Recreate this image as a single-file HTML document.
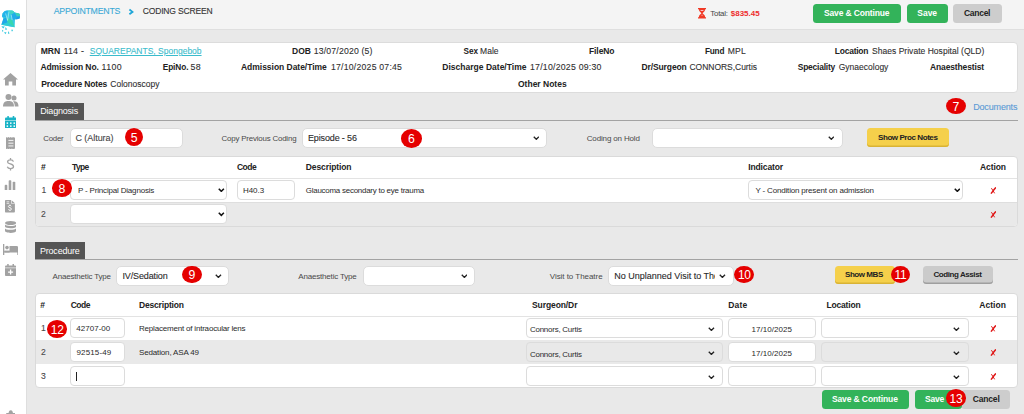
<!DOCTYPE html><html><head><meta charset="utf-8"><style>html,body{margin:0;padding:0;width:1024px;height:414px;overflow:hidden;font-family:'Liberation Sans', sans-serif;}</style></head><body><div style="position:relative;width:1024px;height:414px;overflow:hidden"><div style="position:absolute;left:0px;top:0px;width:1024px;height:414px;background:#e9e9e9"></div>
<div style="position:absolute;left:0px;top:0px;width:26px;height:414px;background:#fff"></div>
<div style="position:absolute;left:26px;top:0px;width:1px;height:414px;background:#dedede"></div>
<div style="position:absolute;left:27px;top:0px;width:997px;height:29px;background:#f4f4f4"></div>
<div style="position:absolute;left:27px;top:29px;width:997px;height:1px;background:#dfdfdf"></div>
<span id="t0" style="position:absolute;left:53.76px;top:6.40px;font-size:8.756px;font-weight:400;color:#3aa9d6;line-height:10.06px;white-space:pre;letter-spacing:-0.220px;-webkit-text-stroke:0.1px currentColor;">APPOINTMENTS<span id="mt0" style="display:inline-block;width:0;height:0"></span></span>
<svg style="position:absolute;left:128px;top:7.5px" width="7" height="8" viewBox="0 0 7 8"><path d="M1.4 1.5 L4.5 3.9 L1.4 6.3" stroke="#1fa6d8" stroke-width="1.8" fill="none"/></svg>
<span id="t1" style="position:absolute;left:142.72px;top:7.40px;font-size:8.562px;font-weight:400;color:#333;line-height:9.84px;white-space:pre;letter-spacing:-0.193px;-webkit-text-stroke:0.1px currentColor;">CODING SCREEN<span id="mt1" style="display:inline-block;width:0;height:0"></span></span>
<svg style="position:absolute;left:698.3px;top:8.3px" width="8" height="10.5" viewBox="0 0 8 10.5"><path d="M0 0 H8 V1.3 H7.2 C7.2 3.4 5.2 4.3 4.6 5.25 C5.2 6.2 7.2 7.1 7.2 9.2 H8 V10.5 H0 V9.2 H0.8 C0.8 7.1 2.8 6.2 3.4 5.25 C2.8 4.3 0.8 3.4 0.8 1.3 H0 Z" fill="#f03a26"/><rect x="2.6" y="2.2" width="2.8" height="0.8" fill="#fde"/><rect x="3.6" y="6.8" width="0.9" height="0.9" fill="#fde"/></svg>
<span id="t2" style="position:absolute;left:710.24px;top:8.80px;font-size:7.92px;font-weight:400;color:#444;line-height:9.10px;white-space:pre;letter-spacing:-0.220px;">Total:<span id="mt2" style="display:inline-block;width:0;height:0"></span></span>
<span id="t3" style="position:absolute;left:730.76px;top:8.80px;font-size:8px;font-weight:700;color:#ee2d2d;line-height:9.19px;white-space:pre;letter-spacing:0.000px;">$835.45<span id="mt3" style="display:inline-block;width:0;height:0"></span></span>
<div style="position:absolute;left:813px;top:4px;width:88px;height:19px;background:#33b35a;border-radius:3.5px;"></div>
<span id="t4" style="position:absolute;left:824.00px;top:8.75px;font-size:8.5px;font-weight:700;color:#fff;line-height:9.77px;white-space:pre;letter-spacing:-0.149px;">Save &amp; Continue<span id="mt4" style="display:inline-block;width:0;height:0"></span></span>
<div style="position:absolute;left:907px;top:4px;width:41px;height:19px;background:#33b35a;border-radius:3.5px;"></div>
<span id="t5" style="position:absolute;left:917.24px;top:8.75px;font-size:8.5px;font-weight:700;color:#fff;line-height:9.77px;white-space:pre;letter-spacing:0.000px;">Save<span id="mt5" style="display:inline-block;width:0;height:0"></span></span>
<div style="position:absolute;left:953px;top:4px;width:49px;height:19px;background:#cdcdcd;border-radius:3.5px;"></div>
<span id="t6" style="position:absolute;left:964.00px;top:8.75px;font-size:8.5px;font-weight:700;color:#222;line-height:9.77px;white-space:pre;letter-spacing:-0.288px;">Cancel<span id="mt6" style="display:inline-block;width:0;height:0"></span></span>
<div style="position:absolute;left:35px;top:42px;width:983px;height:51px;background:#fff;border:1px solid #dcdcdc;border-radius:4px;box-sizing:border-box"></div>
<span id="t7" style="position:absolute;left:40.76px;top:47.00px;font-size:8.626px;font-weight:700;color:#222;line-height:9.91px;white-space:pre;letter-spacing:-0.060px;">MRN<span id="mt7" style="display:inline-block;width:0;height:0"></span></span>
<span id="t8" style="position:absolute;left:63.48px;top:46.00px;font-size:8.884px;font-weight:400;color:#303030;line-height:10.21px;white-space:pre;letter-spacing:0.220px;-webkit-text-stroke:0.1px currentColor;">114 -<span id="mt8" style="display:inline-block;width:0;height:0"></span></span>
<span id="t9" style="position:absolute;left:89.76px;top:47.00px;font-size:8.5px;font-weight:400;color:#3bbccc;line-height:9.77px;white-space:pre;letter-spacing:0.000px;-webkit-text-stroke:0.1px currentColor;text-decoration:underline;">SQUAREPANTS, Spongebob<span id="mt9" style="display:inline-block;width:0;height:0"></span></span>
<span id="t10" style="position:absolute;left:292.00px;top:47.00px;font-size:8.5px;font-weight:700;color:#222;line-height:9.77px;white-space:pre;letter-spacing:0.000px;">DOB<span id="mt10" style="display:inline-block;width:0;height:0"></span></span>
<span id="t11" style="position:absolute;left:313.72px;top:46.00px;font-size:8.694px;font-weight:400;color:#303030;line-height:9.99px;white-space:pre;letter-spacing:0.171px;-webkit-text-stroke:0.1px currentColor;">13/07/2020 (5)<span id="mt11" style="display:inline-block;width:0;height:0"></span></span>
<span id="t12" style="position:absolute;left:463.48px;top:47.00px;font-size:8.208px;font-weight:700;color:#222;line-height:9.43px;white-space:pre;letter-spacing:0.020px;">Sex<span id="mt12" style="display:inline-block;width:0;height:0"></span></span>
<span id="t13" style="position:absolute;left:480.00px;top:47.00px;font-size:8.5px;font-weight:400;color:#303030;line-height:9.77px;white-space:pre;letter-spacing:0.053px;-webkit-text-stroke:0.1px currentColor;">Male<span id="mt13" style="display:inline-block;width:0;height:0"></span></span>
<span id="t14" style="position:absolute;left:589.00px;top:47.00px;font-size:8.5px;font-weight:700;color:#222;line-height:9.77px;white-space:pre;letter-spacing:-0.096px;">FileNo<span id="mt14" style="display:inline-block;width:0;height:0"></span></span>
<span id="t15" style="position:absolute;left:705.00px;top:47.00px;font-size:8.247px;font-weight:700;color:#222;line-height:9.48px;white-space:pre;letter-spacing:-0.220px;">Fund<span id="mt15" style="display:inline-block;width:0;height:0"></span></span>
<span id="t16" style="position:absolute;left:727.72px;top:47.00px;font-size:8.6px;font-weight:400;color:#303030;line-height:9.88px;white-space:pre;letter-spacing:0.140px;-webkit-text-stroke:0.1px currentColor;">MPL<span id="mt16" style="display:inline-block;width:0;height:0"></span></span>
<span id="t17" style="position:absolute;left:834.76px;top:47.00px;font-size:8.486px;font-weight:700;color:#222;line-height:9.75px;white-space:pre;letter-spacing:-0.220px;">Location<span id="mt17" style="display:inline-block;width:0;height:0"></span></span>
<span id="t18" style="position:absolute;left:872.00px;top:47.00px;font-size:8.5px;font-weight:400;color:#303030;line-height:9.77px;white-space:pre;letter-spacing:0.030px;-webkit-text-stroke:0.1px currentColor;">Shaes Private Hospital (QLD)<span id="mt18" style="display:inline-block;width:0;height:0"></span></span>
<span id="t19" style="position:absolute;left:40.48px;top:63.00px;font-size:8.5px;font-weight:700;color:#222;line-height:9.77px;white-space:pre;letter-spacing:-0.093px;">Admission No.<span id="mt19" style="display:inline-block;width:0;height:0"></span></span>
<span id="t20" style="position:absolute;left:101.60px;top:62.00px;font-size:8.8px;font-weight:400;color:#303030;line-height:10.11px;white-space:pre;letter-spacing:0.350px;-webkit-text-stroke:0.1px currentColor;">1100<span id="mt20" style="display:inline-block;width:0;height:0"></span></span>
<span id="t21" style="position:absolute;left:162.72px;top:63.00px;font-size:8.287px;font-weight:700;color:#222;line-height:9.52px;white-space:pre;letter-spacing:-0.092px;">EpiNo.<span id="mt21" style="display:inline-block;width:0;height:0"></span></span>
<span id="t22" style="position:absolute;left:190.40px;top:62.00px;font-size:8.8px;font-weight:400;color:#303030;line-height:10.11px;white-space:pre;letter-spacing:0.550px;-webkit-text-stroke:0.1px currentColor;">58<span id="mt22" style="display:inline-block;width:0;height:0"></span></span>
<span id="t23" style="position:absolute;left:241.00px;top:63.00px;font-size:8.5px;font-weight:700;color:#222;line-height:9.77px;white-space:pre;letter-spacing:-0.027px;">Admission Date/Time<span id="mt23" style="display:inline-block;width:0;height:0"></span></span>
<span id="t24" style="position:absolute;left:331.00px;top:62.00px;font-size:8.688px;font-weight:400;color:#303030;line-height:9.98px;white-space:pre;letter-spacing:0.220px;-webkit-text-stroke:0.1px currentColor;">17/10/2025 07:45<span id="mt24" style="display:inline-block;width:0;height:0"></span></span>
<span id="t25" style="position:absolute;left:442.24px;top:63.00px;font-size:8.5px;font-weight:700;color:#222;line-height:9.77px;white-space:pre;letter-spacing:0.018px;">Discharge Date/Time<span id="mt25" style="display:inline-block;width:0;height:0"></span></span>
<span id="t26" style="position:absolute;left:530.00px;top:62.00px;font-size:8.769px;font-weight:400;color:#303030;line-height:10.08px;white-space:pre;letter-spacing:0.220px;-webkit-text-stroke:0.1px currentColor;">17/10/2025 09:30<span id="mt26" style="display:inline-block;width:0;height:0"></span></span>
<span id="t27" style="position:absolute;left:641.48px;top:63.00px;font-size:8.5px;font-weight:700;color:#222;line-height:9.77px;white-space:pre;letter-spacing:-0.107px;">Dr/Surgeon<span id="mt27" style="display:inline-block;width:0;height:0"></span></span>
<span id="t28" style="position:absolute;left:689.52px;top:63.00px;font-size:8.5px;font-weight:400;color:#303030;line-height:9.77px;white-space:pre;letter-spacing:-0.037px;-webkit-text-stroke:0.1px currentColor;">CONNORS,Curtis<span id="mt28" style="display:inline-block;width:0;height:0"></span></span>
<span id="t29" style="position:absolute;left:797.76px;top:63.00px;font-size:8.443px;font-weight:700;color:#222;line-height:9.70px;white-space:pre;letter-spacing:-0.220px;">Speciality<span id="mt29" style="display:inline-block;width:0;height:0"></span></span>
<span id="t30" style="position:absolute;left:838.76px;top:63.00px;font-size:8.5px;font-weight:400;color:#303030;line-height:9.77px;white-space:pre;letter-spacing:0.000px;-webkit-text-stroke:0.1px currentColor;">Gynaecology<span id="mt30" style="display:inline-block;width:0;height:0"></span></span>
<span id="t31" style="position:absolute;left:930.00px;top:63.00px;font-size:8.5px;font-weight:700;color:#222;line-height:9.77px;white-space:pre;letter-spacing:-0.133px;">Anaesthestist<span id="mt31" style="display:inline-block;width:0;height:0"></span></span>
<span id="t32" style="position:absolute;left:41.24px;top:79.80px;font-size:8.5px;font-weight:700;color:#222;line-height:9.77px;white-space:pre;letter-spacing:-0.137px;">Procedure Notes<span id="mt32" style="display:inline-block;width:0;height:0"></span></span>
<span id="t33" style="position:absolute;left:110.24px;top:79.80px;font-size:8.5px;font-weight:400;color:#303030;line-height:9.77px;white-space:pre;letter-spacing:0.016px;-webkit-text-stroke:0.1px currentColor;">Colonoscopy<span id="mt33" style="display:inline-block;width:0;height:0"></span></span>
<span id="t34" style="position:absolute;left:518.00px;top:79.80px;font-size:8.5px;font-weight:700;color:#222;line-height:9.77px;white-space:pre;letter-spacing:0.000px;">Other Notes<span id="mt34" style="display:inline-block;width:0;height:0"></span></span>
<div style="position:absolute;left:35px;top:103px;width:49px;height:17px;background:#555"></div>
<span id="t35" style="position:absolute;left:40.24px;top:106.10px;font-size:9px;font-weight:400;color:#fff;line-height:10.34px;white-space:pre;letter-spacing:-0.200px;">Diagnosis<span id="mt35" style="display:inline-block;width:0;height:0"></span></span>
<div style="position:absolute;left:35px;top:120px;width:983px;height:1px;background:#a3a3a3"></div>
<span id="t37" style="position:absolute;left:973.20px;top:102.00px;font-size:9px;font-weight:400;color:#5a9ad6;line-height:10.34px;white-space:pre;letter-spacing:-0.160px;-webkit-text-stroke:0.1px currentColor;">Documents<span id="mt37" style="display:inline-block;width:0;height:0"></span></span>
<span id="t38" style="position:absolute;left:43.24px;top:134.00px;font-size:7.817px;font-weight:400;color:#4a4a4a;line-height:8.98px;white-space:pre;letter-spacing:-0.200px;">Coder<span id="mt38" style="display:inline-block;width:0;height:0"></span></span>
<div style="position:absolute;left:70px;top:128px;width:113px;height:20px;background:#fff;border:1px solid #dcdcdc;border-radius:5px;box-sizing:border-box"></div>
<span id="t39" style="position:absolute;left:75.48px;top:133.30px;font-size:9px;font-weight:400;color:#454545;line-height:10.34px;white-space:pre;letter-spacing:-0.053px;-webkit-text-stroke:0.1px currentColor;">C (Altura)<span id="mt39" style="display:inline-block;width:0;height:0"></span></span>
<span id="t41" style="position:absolute;left:221.48px;top:134.00px;font-size:7.909px;font-weight:400;color:#4a4a4a;line-height:9.09px;white-space:pre;letter-spacing:-0.182px;">Copy Previous Coding<span id="mt41" style="display:inline-block;width:0;height:0"></span></span>
<div style="position:absolute;left:302px;top:128px;width:245px;height:20px;background:#fff;border:1px solid #dcdcdc;border-radius:5px;box-sizing:border-box"></div>
<span id="t42" style="position:absolute;left:308.00px;top:133.10px;font-size:9px;font-weight:400;color:#2a2a2a;line-height:10.34px;white-space:pre;letter-spacing:-0.145px;-webkit-text-stroke:0.1px currentColor;">Episode - 56<span id="mt42" style="display:inline-block;width:0;height:0"></span></span>
<svg style="position:absolute;left:532.675px;top:136.0625px" width="6.6499999999999995" height="4.2749999999999995" viewBox="0 0 7 4.5"><path d="M0.8 0.8 L3.5 3.5 L6.2 0.8" stroke="#222" stroke-width="1.35" fill="none"/></svg>
<span id="t44" style="position:absolute;left:586.72px;top:133.90px;font-size:8px;font-weight:400;color:#4a4a4a;line-height:9.19px;white-space:pre;letter-spacing:-0.148px;">Coding on Hold<span id="mt44" style="display:inline-block;width:0;height:0"></span></span>
<div style="position:absolute;left:652px;top:128px;width:191px;height:20px;background:#fff;border:1px solid #dcdcdc;border-radius:5px;box-sizing:border-box"></div>
<svg style="position:absolute;left:827.675px;top:136.0625px" width="6.6499999999999995" height="4.2749999999999995" viewBox="0 0 7 4.5"><path d="M0.8 0.8 L3.5 3.5 L6.2 0.8" stroke="#222" stroke-width="1.35" fill="none"/></svg>
<div style="position:absolute;left:867px;top:128px;width:82px;height:19px;background:#f5d04b;border-radius:3.5px;box-shadow: inset 0 -1.5px 0 #d9b335;"></div>
<span id="t45" style="position:absolute;left:878.00px;top:133.40px;font-size:8.053px;font-weight:700;color:#222;line-height:9.25px;white-space:pre;letter-spacing:-0.450px;">Show Proc Notes<span id="mt45" style="display:inline-block;width:0;height:0"></span></span>
<div style="position:absolute;left:35px;top:156px;width:983px;height:71px;background:#fff;border:1px solid #dadada;border-radius:4px;box-sizing:border-box;overflow:hidden"></div>
<div style="position:absolute;left:36px;top:178px;width:981px;height:1px;background:#e3e3e3"></div>
<div style="position:absolute;left:36px;top:203px;width:981px;height:23px;background:#e9e9e9;border-radius:0 0 3px 3px"></div>
<div style="position:absolute;left:36px;top:202px;width:981px;height:1px;background:#dedede"></div>
<span id="t46" style="position:absolute;left:41.00px;top:163.00px;font-size:8.5px;font-weight:700;color:#222;line-height:9.77px;white-space:pre;letter-spacing:0.000px;">#<span id="mt46" style="display:inline-block;width:0;height:0"></span></span>
<span id="t47" style="position:absolute;left:72.04px;top:163.00px;font-size:8.443px;font-weight:700;color:#222;line-height:9.70px;white-space:pre;letter-spacing:-0.600px;">Type<span id="mt47" style="display:inline-block;width:0;height:0"></span></span>
<span id="t48" style="position:absolute;left:237.00px;top:163.00px;font-size:8.5px;font-weight:700;color:#222;line-height:9.77px;white-space:pre;letter-spacing:-0.533px;">Code<span id="mt48" style="display:inline-block;width:0;height:0"></span></span>
<span id="t49" style="position:absolute;left:305.76px;top:163.00px;font-size:8.5px;font-weight:700;color:#222;line-height:9.77px;white-space:pre;letter-spacing:-0.096px;">Description<span id="mt49" style="display:inline-block;width:0;height:0"></span></span>
<span id="t50" style="position:absolute;left:748.24px;top:163.00px;font-size:8.5px;font-weight:700;color:#222;line-height:9.77px;white-space:pre;letter-spacing:-0.120px;">Indicator<span id="mt50" style="display:inline-block;width:0;height:0"></span></span>
<span id="t51" style="position:absolute;left:980.00px;top:163.00px;font-size:8.5px;font-weight:700;color:#222;line-height:9.77px;white-space:pre;letter-spacing:-0.096px;">Action<span id="mt51" style="display:inline-block;width:0;height:0"></span></span>
<span id="t52" style="position:absolute;left:41.50px;top:185.70px;font-size:8.6px;font-weight:400;color:#4a4a4a;line-height:9.88px;white-space:pre;letter-spacing:0.000px;-webkit-text-stroke:0.1px currentColor;">1<span id="mt52" style="display:inline-block;width:0;height:0"></span></span>
<div style="position:absolute;left:70px;top:180px;width:157px;height:20px;background:#fff;border:1px solid #dcdcdc;border-radius:4px;box-sizing:border-box"></div>
<span id="t53" style="position:absolute;left:78.00px;top:185.70px;font-size:8px;font-weight:400;color:#2a2a2a;line-height:9.19px;white-space:pre;letter-spacing:-0.182px;">P - Principal Diagnosis<span id="mt53" style="display:inline-block;width:0;height:0"></span></span>
<svg style="position:absolute;left:218.175px;top:188.16250000000002px" width="6.6499999999999995" height="4.2749999999999995" viewBox="0 0 7 4.5"><path d="M0.8 0.8 L3.5 3.5 L6.2 0.8" stroke="#111" stroke-width="1.6" fill="none"/></svg>
<div style="position:absolute;left:237px;top:180px;width:58px;height:20px;background:#fff;border:1px solid #dcdcdc;border-radius:4px;box-sizing:border-box"></div>
<span id="t55" style="position:absolute;left:242.96px;top:185.70px;font-size:8px;font-weight:400;color:#2a2a2a;line-height:9.19px;white-space:pre;letter-spacing:-0.040px;">H40.3<span id="mt55" style="display:inline-block;width:0;height:0"></span></span>
<span id="t56" style="position:absolute;left:305.76px;top:185.70px;font-size:7.911px;font-weight:400;color:#2a2a2a;line-height:9.09px;white-space:pre;letter-spacing:-0.220px;">Glaucoma secondary to eye trauma<span id="mt56" style="display:inline-block;width:0;height:0"></span></span>
<div style="position:absolute;left:748px;top:180px;width:215px;height:20px;background:#fff;border:1px solid #dcdcdc;border-radius:4px;box-sizing:border-box"></div>
<span id="t57" style="position:absolute;left:755.52px;top:185.70px;font-size:8px;font-weight:400;color:#2a2a2a;line-height:9.19px;white-space:pre;letter-spacing:-0.179px;">Y - Condition present on admission<span id="mt57" style="display:inline-block;width:0;height:0"></span></span>
<svg style="position:absolute;left:953.675px;top:188.16250000000002px" width="6.6499999999999995" height="4.2749999999999995" viewBox="0 0 7 4.5"><path d="M0.8 0.8 L3.5 3.5 L6.2 0.8" stroke="#111" stroke-width="1.6" fill="none"/></svg>
<svg style="position:absolute;left:989.6px;top:186.7px" width="6.5" height="7" viewBox="0 0 6.5 7"><path d="M1.4 1.2 C2.6 2.8 3.6 4.6 4.6 6.3" stroke="#e01818" stroke-width="1.0" fill="none"/><path d="M5.9 0.4 C4.2 2.2 2.6 4.4 1.0 6.6" stroke="#e01818" stroke-width="1.5" fill="none"/></svg>
<span id="t58" style="position:absolute;left:41.00px;top:210.20px;font-size:8.6px;font-weight:400;color:#4a4a4a;line-height:9.88px;white-space:pre;letter-spacing:0.000px;-webkit-text-stroke:0.1px currentColor;">2<span id="mt58" style="display:inline-block;width:0;height:0"></span></span>
<div style="position:absolute;left:70px;top:204px;width:157px;height:20px;background:#fff;border:1px solid #dcdcdc;border-radius:4px;box-sizing:border-box"></div>
<svg style="position:absolute;left:218.175px;top:212.4625px" width="6.6499999999999995" height="4.2749999999999995" viewBox="0 0 7 4.5"><path d="M0.8 0.8 L3.5 3.5 L6.2 0.8" stroke="#111" stroke-width="1.6" fill="none"/></svg>
<svg style="position:absolute;left:989.6px;top:211.2px" width="6.5" height="7" viewBox="0 0 6.5 7"><path d="M1.4 1.2 C2.6 2.8 3.6 4.6 4.6 6.3" stroke="#e01818" stroke-width="1.0" fill="none"/><path d="M5.9 0.4 C4.2 2.2 2.6 4.4 1.0 6.6" stroke="#e01818" stroke-width="1.5" fill="none"/></svg>
<div style="position:absolute;left:35px;top:242px;width:50px;height:17px;background:#555"></div>
<span id="t59" style="position:absolute;left:39.96px;top:245.70px;font-size:8.946px;font-weight:400;color:#fff;line-height:10.28px;white-space:pre;letter-spacing:-0.170px;">Procedure<span id="mt59" style="display:inline-block;width:0;height:0"></span></span>
<div style="position:absolute;left:35px;top:259px;width:983px;height:1px;background:#a3a3a3"></div>
<span id="t60" style="position:absolute;left:52.52px;top:271.60px;font-size:8px;font-weight:400;color:#4a4a4a;line-height:9.19px;white-space:pre;letter-spacing:-0.181px;">Anaesthetic Type<span id="mt60" style="display:inline-block;width:0;height:0"></span></span>
<div style="position:absolute;left:116px;top:266px;width:113px;height:20px;background:#fff;border:1px solid #dcdcdc;border-radius:5px;box-sizing:border-box"></div>
<span id="t61" style="position:absolute;left:122.48px;top:271.00px;font-size:9px;font-weight:400;color:#2a2a2a;line-height:10.34px;white-space:pre;letter-spacing:-0.128px;-webkit-text-stroke:0.1px currentColor;">IV/Sedation<span id="mt61" style="display:inline-block;width:0;height:0"></span></span>
<svg style="position:absolute;left:214.80499999999998px;top:274.0175px" width="6.79" height="4.365" viewBox="0 0 7 4.5"><path d="M0.8 0.8 L3.5 3.5 L6.2 0.8" stroke="#222" stroke-width="1.4" fill="none"/></svg>
<span id="t63" style="position:absolute;left:298.24px;top:271.60px;font-size:8px;font-weight:400;color:#4a4a4a;line-height:9.19px;white-space:pre;letter-spacing:-0.181px;">Anaesthetic Type<span id="mt63" style="display:inline-block;width:0;height:0"></span></span>
<div style="position:absolute;left:363px;top:266px;width:112px;height:20px;background:#fff;border:1px solid #dcdcdc;border-radius:5px;box-sizing:border-box"></div>
<svg style="position:absolute;left:460.605px;top:274.0175px" width="6.79" height="4.365" viewBox="0 0 7 4.5"><path d="M0.8 0.8 L3.5 3.5 L6.2 0.8" stroke="#222" stroke-width="1.4" fill="none"/></svg>
<span id="t64" style="position:absolute;left:549.76px;top:271.60px;font-size:8px;font-weight:400;color:#4a4a4a;line-height:9.19px;white-space:pre;letter-spacing:-0.043px;">Visit to Theatre<span id="mt64" style="display:inline-block;width:0;height:0"></span></span>
<div style="position:absolute;left:608px;top:266px;width:126px;height:20px;background:#fff;border:1px solid #dcdcdc;border-radius:5px;box-sizing:border-box"></div>
<div style="position:absolute;left:614.3px;top:267px;width:100.5px;height:18px;overflow:hidden">
<span id="t65" style="position:absolute;left:0.00px;top:4.00px;font-size:9px;font-weight:400;color:#2a2a2a;line-height:10.34px;white-space:pre;letter-spacing:0.000px;-webkit-text-stroke:0.1px currentColor;">No Unplanned Visit to Theatre<span id="mt65" style="display:inline-block;width:0;height:0"></span></span>
</div>
<svg style="position:absolute;left:718.905px;top:274.0175px" width="6.79" height="4.365" viewBox="0 0 7 4.5"><path d="M0.8 0.8 L3.5 3.5 L6.2 0.8" stroke="#222" stroke-width="1.4" fill="none"/></svg>
<div style="position:absolute;left:835px;top:265.5px;width:60px;height:18.5px;background:#f5d04b;border-radius:3.5px;box-shadow: inset 0 -1.5px 0 #d9b335;"></div>
<span id="t67" style="position:absolute;left:845.00px;top:270.30px;font-size:8.026px;font-weight:700;color:#222;line-height:9.22px;white-space:pre;letter-spacing:-0.450px;">Show MBS<span id="mt67" style="display:inline-block;width:0;height:0"></span></span>
<div style="position:absolute;left:923px;top:265.5px;width:70px;height:18.5px;background:#cbcbcb;border-radius:3.5px;box-shadow: inset 0 -1.5px 0 #9f9f9f;"></div>
<span id="t69" style="position:absolute;left:933.52px;top:270.30px;font-size:8.001px;font-weight:700;color:#222;line-height:9.19px;white-space:pre;letter-spacing:-0.430px;">Coding Assist<span id="mt69" style="display:inline-block;width:0;height:0"></span></span>
<div style="position:absolute;left:35px;top:293px;width:983px;height:95px;background:#fff;border:1px solid #dadada;border-radius:4px;box-sizing:border-box"></div>
<div style="position:absolute;left:36px;top:316px;width:981px;height:1px;background:#e3e3e3"></div>
<div style="position:absolute;left:36px;top:340px;width:981px;height:24px;background:#e9e9e9"></div>
<span id="t70" style="position:absolute;left:40.24px;top:301.30px;font-size:8.5px;font-weight:700;color:#222;line-height:9.77px;white-space:pre;letter-spacing:0.000px;">#<span id="mt70" style="display:inline-block;width:0;height:0"></span></span>
<span id="t71" style="position:absolute;left:70.76px;top:301.30px;font-size:8.5px;font-weight:700;color:#222;line-height:9.77px;white-space:pre;letter-spacing:-0.533px;">Code<span id="mt71" style="display:inline-block;width:0;height:0"></span></span>
<span id="t72" style="position:absolute;left:139.00px;top:301.30px;font-size:8.5px;font-weight:700;color:#222;line-height:9.77px;white-space:pre;letter-spacing:-0.176px;">Description<span id="mt72" style="display:inline-block;width:0;height:0"></span></span>
<span id="t73" style="position:absolute;left:532.00px;top:301.30px;font-size:8.5px;font-weight:700;color:#222;line-height:9.77px;white-space:pre;letter-spacing:-0.089px;">Surgeon/Dr<span id="mt73" style="display:inline-block;width:0;height:0"></span></span>
<span id="t74" style="position:absolute;left:728.24px;top:301.30px;font-size:8.5px;font-weight:700;color:#222;line-height:9.77px;white-space:pre;letter-spacing:0.160px;">Date<span id="mt74" style="display:inline-block;width:0;height:0"></span></span>
<span id="t75" style="position:absolute;left:826.48px;top:301.30px;font-size:8.5px;font-weight:700;color:#222;line-height:9.77px;white-space:pre;letter-spacing:-0.183px;">Location<span id="mt75" style="display:inline-block;width:0;height:0"></span></span>
<span id="t76" style="position:absolute;left:979.24px;top:301.30px;font-size:8.5px;font-weight:700;color:#222;line-height:9.77px;white-space:pre;letter-spacing:0.032px;">Action<span id="mt76" style="display:inline-block;width:0;height:0"></span></span>
<span id="t77" style="position:absolute;left:41.00px;top:323.90px;font-size:8.6px;font-weight:400;color:#4a4a4a;line-height:9.88px;white-space:pre;letter-spacing:0.000px;-webkit-text-stroke:0.1px currentColor;">1<span id="mt77" style="display:inline-block;width:0;height:0"></span></span>
<div style="position:absolute;left:70px;top:318px;width:55px;height:20px;background:#fff;border:1px solid #dcdcdc;border-radius:4px;box-sizing:border-box"></div>
<span id="t78" style="position:absolute;left:76.28px;top:323.90px;font-size:8px;font-weight:400;color:#2a2a2a;line-height:9.19px;white-space:pre;letter-spacing:0.023px;">42707-00<span id="mt78" style="display:inline-block;width:0;height:0"></span></span>
<span id="t79" style="position:absolute;left:139.00px;top:323.90px;font-size:8px;font-weight:400;color:#2a2a2a;line-height:9.19px;white-space:pre;letter-spacing:-0.197px;">Replacement of intraocular lens<span id="mt79" style="display:inline-block;width:0;height:0"></span></span>
<div style="position:absolute;left:526px;top:318px;width:197px;height:20px;background:#fff;border:1px solid #dcdcdc;border-radius:4px;box-sizing:border-box"></div>
<span id="t80" style="position:absolute;left:530.00px;top:325.20px;font-size:7.935px;font-weight:400;color:#2a2a2a;line-height:9.12px;white-space:pre;letter-spacing:-0.220px;">Connors, Curtis<span id="mt80" style="display:inline-block;width:0;height:0"></span></span>
<svg style="position:absolute;left:707.8050000000001px;top:326.8175px" width="6.79" height="4.365" viewBox="0 0 7 4.5"><path d="M0.8 0.8 L3.5 3.5 L6.2 0.8" stroke="#222" stroke-width="1.4" fill="none"/></svg>
<div style="position:absolute;left:728px;top:318px;width:88px;height:20px;background:#fff;border:1px solid #dcdcdc;border-radius:4px;box-sizing:border-box"></div>
<span id="t81" style="position:absolute;left:751.48px;top:324.50px;font-size:8px;font-weight:400;color:#2a2a2a;line-height:9.19px;white-space:pre;letter-spacing:0.053px;">17/10/2025<span id="mt81" style="display:inline-block;width:0;height:0"></span></span>
<div style="position:absolute;left:821px;top:318px;width:148px;height:20px;background:#fff;border:1px solid #dcdcdc;border-radius:4px;box-sizing:border-box"></div>
<svg style="position:absolute;left:953.205px;top:326.8175px" width="6.79" height="4.365" viewBox="0 0 7 4.5"><path d="M0.8 0.8 L3.5 3.5 L6.2 0.8" stroke="#222" stroke-width="1.4" fill="none"/></svg>
<svg style="position:absolute;left:989.6px;top:324.9px" width="6.5" height="7" viewBox="0 0 6.5 7"><path d="M1.4 1.2 C2.6 2.8 3.6 4.6 4.6 6.3" stroke="#e01818" stroke-width="1.0" fill="none"/><path d="M5.9 0.4 C4.2 2.2 2.6 4.4 1.0 6.6" stroke="#e01818" stroke-width="1.5" fill="none"/></svg>
<span id="t82" style="position:absolute;left:41.00px;top:348.20px;font-size:8.6px;font-weight:400;color:#4a4a4a;line-height:9.88px;white-space:pre;letter-spacing:0.000px;-webkit-text-stroke:0.1px currentColor;">2<span id="mt82" style="display:inline-block;width:0;height:0"></span></span>
<div style="position:absolute;left:70px;top:342px;width:55px;height:20px;background:#fff;border:1px solid #dcdcdc;border-radius:4px;box-sizing:border-box"></div>
<span id="t83" style="position:absolute;left:76.48px;top:348.20px;font-size:8px;font-weight:400;color:#2a2a2a;line-height:9.19px;white-space:pre;letter-spacing:0.137px;">92515-49<span id="mt83" style="display:inline-block;width:0;height:0"></span></span>
<span id="t84" style="position:absolute;left:139.00px;top:348.20px;font-size:8px;font-weight:400;color:#2a2a2a;line-height:9.19px;white-space:pre;letter-spacing:-0.149px;">Sedation, ASA 49<span id="mt84" style="display:inline-block;width:0;height:0"></span></span>
<div style="position:absolute;left:526px;top:342px;width:197px;height:20px;background:#e9e9e9;border:1px solid #dcdcdc;border-radius:4px;box-sizing:border-box"></div>
<span id="t85" style="position:absolute;left:530.00px;top:349.50px;font-size:7.934px;font-weight:400;color:#2a2a2a;line-height:9.12px;white-space:pre;letter-spacing:-0.220px;">Connors, Curtis<span id="mt85" style="display:inline-block;width:0;height:0"></span></span>
<svg style="position:absolute;left:707.8050000000001px;top:350.8175px" width="6.79" height="4.365" viewBox="0 0 7 4.5"><path d="M0.8 0.8 L3.5 3.5 L6.2 0.8" stroke="#222" stroke-width="1.4" fill="none"/></svg>
<div style="position:absolute;left:728px;top:342px;width:88px;height:20px;background:#fff;border:1px solid #dcdcdc;border-radius:4px;box-sizing:border-box"></div>
<span id="t86" style="position:absolute;left:751.48px;top:348.80px;font-size:8px;font-weight:400;color:#2a2a2a;line-height:9.19px;white-space:pre;letter-spacing:0.053px;">17/10/2025<span id="mt86" style="display:inline-block;width:0;height:0"></span></span>
<div style="position:absolute;left:821px;top:342px;width:148px;height:20px;background:#e9e9e9;border:1px solid #dcdcdc;border-radius:4px;box-sizing:border-box"></div>
<svg style="position:absolute;left:953.205px;top:350.8175px" width="6.79" height="4.365" viewBox="0 0 7 4.5"><path d="M0.8 0.8 L3.5 3.5 L6.2 0.8" stroke="#222" stroke-width="1.4" fill="none"/></svg>
<svg style="position:absolute;left:989.6px;top:348.9px" width="6.5" height="7" viewBox="0 0 6.5 7"><path d="M1.4 1.2 C2.6 2.8 3.6 4.6 4.6 6.3" stroke="#e01818" stroke-width="1.0" fill="none"/><path d="M5.9 0.4 C4.2 2.2 2.6 4.4 1.0 6.6" stroke="#e01818" stroke-width="1.5" fill="none"/></svg>
<span id="t87" style="position:absolute;left:41.00px;top:371.80px;font-size:8.6px;font-weight:400;color:#4a4a4a;line-height:9.88px;white-space:pre;letter-spacing:0.000px;-webkit-text-stroke:0.1px currentColor;">3<span id="mt87" style="display:inline-block;width:0;height:0"></span></span>
<div style="position:absolute;left:70px;top:366px;width:55px;height:20px;background:#fff;border:1px solid #dcdcdc;border-radius:4px;box-sizing:border-box"></div>
<div style="position:absolute;left:76px;top:372px;width:1px;height:9px;background:#222"></div>
<div style="position:absolute;left:526px;top:366px;width:197px;height:20px;background:#fff;border:1px solid #dcdcdc;border-radius:4px;box-sizing:border-box"></div>
<svg style="position:absolute;left:707.8050000000001px;top:374.8175px" width="6.79" height="4.365" viewBox="0 0 7 4.5"><path d="M0.8 0.8 L3.5 3.5 L6.2 0.8" stroke="#222" stroke-width="1.4" fill="none"/></svg>
<div style="position:absolute;left:728px;top:366px;width:88px;height:20px;background:#fff;border:1px solid #dcdcdc;border-radius:4px;box-sizing:border-box"></div>
<div style="position:absolute;left:821px;top:366px;width:148px;height:20px;background:#fff;border:1px solid #dcdcdc;border-radius:4px;box-sizing:border-box"></div>
<svg style="position:absolute;left:953.205px;top:374.8175px" width="6.79" height="4.365" viewBox="0 0 7 4.5"><path d="M0.8 0.8 L3.5 3.5 L6.2 0.8" stroke="#222" stroke-width="1.4" fill="none"/></svg>
<svg style="position:absolute;left:989.6px;top:372.9px" width="6.5" height="7" viewBox="0 0 6.5 7"><path d="M1.4 1.2 C2.6 2.8 3.6 4.6 4.6 6.3" stroke="#e01818" stroke-width="1.0" fill="none"/><path d="M5.9 0.4 C4.2 2.2 2.6 4.4 1.0 6.6" stroke="#e01818" stroke-width="1.5" fill="none"/></svg>
<div style="position:absolute;left:821.5px;top:390px;width:87.5px;height:19px;background:#33b35a;border-radius:3.5px;"></div>
<span id="t89" style="position:absolute;left:831.96px;top:394.90px;font-size:8.5px;font-weight:700;color:#fff;line-height:9.77px;white-space:pre;letter-spacing:-0.114px;">Save &amp; Continue<span id="mt89" style="display:inline-block;width:0;height:0"></span></span>
<div style="position:absolute;left:961px;top:390px;width:48.5px;height:19px;background:#cdcdcd;border-radius:3.5px;"></div>
<span id="t90" style="position:absolute;left:972.72px;top:394.90px;font-size:8.5px;font-weight:700;color:#222;line-height:9.77px;white-space:pre;letter-spacing:-0.160px;">Cancel<span id="mt90" style="display:inline-block;width:0;height:0"></span></span>
<div style="position:absolute;left:914.5px;top:390px;width:47.5px;height:19px;background:#33b35a;border-radius:3.5px;"></div>
<span id="t91" style="position:absolute;left:924.96px;top:394.90px;font-size:8.5px;font-weight:700;color:#fff;line-height:9.77px;white-space:pre;letter-spacing:-0.213px;">Save<span id="mt91" style="display:inline-block;width:0;height:0"></span></span>
<svg style="position:absolute;left:0px;top:8px" width="24" height="28" viewBox="0 0 24 28"><path d="M4.2 3.6 Q5.5 2.4 8 2.4 L12.2 2.5 Q13.8 3 14.6 4.6 L19.2 5.6 Q20.2 6.4 20 8.2 L19.6 10.6 L17 11.2 L15 11.2 L14.6 19.2 L1.4 16.7 L3.4 10.8 L2 8.6 L2.6 5.6 Z" fill="#34c8e4"/><path d="M8 2.4 L12.2 2.5 Q13.8 3 14.6 4.6 L11.2 6.8 Z" fill="#3fd6c6"/><path d="M14.6 4.6 L19.2 5.6 Q20.2 6.4 20 8.2 L17 8.6 Z" fill="#3bd3b8"/><path d="M17 8.6 L20 8.2 L19.6 10.6 L17 11.2 L15 11.2 Z" fill="#1e9ee6"/><path d="M11.2 6.8 L14.6 4.6 L17 8.6 L15 11.2 L12.2 12 Z" fill="#22ace8"/><path d="M2 8.6 L2.6 5.6 L4.2 3.6 Q5.5 2.4 8 2.4 L6.4 9.6 Z" fill="#25b4ea"/><path d="M6.4 9.6 L12.2 12 L14.6 19.2 L7.4 14.6 Z" fill="#38d6b0"/><path d="M1.4 16.7 L3.4 10.8 L6.4 9.6 L7.4 14.6 Z" fill="#1fa7e8"/><path d="M7.4 14.6 L14.6 19.2 L1.4 16.7 Z" fill="#2fcdd4"/><path d="M5.6 5.4 L7.6 12.4 M9 3.6 L7.6 12.4 M12.2 12 L11.2 6.8" stroke="#d2f6f8" stroke-width="0.55" fill="none"/><path d="M1.4 18.2 L4.8 18.4 L3.2 20.6 Z M5.6 19 L7.2 21.4 L5.2 21.8 Z M2 21.8 L3.6 23 L2.2 23.8 Z M4.2 24 L6.6 24.6 L5.2 26.2 Z M8.2 23 L9.6 25.6 L8 25.8 Z M11.2 21.8 L13.2 21.8 L12 23.8 Z" fill="#2cc6dc"/></svg>
<svg style="position:absolute;left:3px;top:73px" width="15" height="12.5" viewBox="0 0 15 12.5"><path d="M7.5 0 L15 6.5 L13 6.5 L13 12.5 L9.3 12.5 L9.3 8.5 L5.7 8.5 L5.7 12.5 L2 12.5 L2 6.5 L0 6.5 Z" fill="#a2a2a2"/></svg>
<svg style="position:absolute;left:3px;top:94px" width="15.5" height="12.5" viewBox="0 0 15.5 12.5"><circle cx="5.5" cy="3" r="3" fill="#a2a2a2"/><circle cx="11" cy="4" r="2.5" fill="#a2a2a2"/><path d="M0 12.5 C0 8 2.5 7 5.5 7 C8.5 7 11 8 11 12.5 Z" fill="#a2a2a2"/><path d="M10 7.3 C13 7 15.5 8 15.5 12.5 L11.8 12.5 C11.8 10 11 8.3 10 7.3Z" fill="#a2a2a2"/></svg>
<svg style="position:absolute;left:4.8px;top:115.5px" width="11.6" height="12.5" viewBox="0 0 11.6 12.5"><path d="M0 2.5 Q0 1.5 1 1.5 H10.6 Q11.6 1.5 11.6 2.5 V4 H0 Z" fill="#19b3c6"/><path d="M0 4.6 H11.6 V11.5 Q11.6 12.5 10.6 12.5 H1 Q0 12.5 0 11.5 Z" fill="#19b3c6"/><rect x="2.3" y="0" width="1.6" height="3" rx="0.5" fill="#19b3c6"/><rect x="7.7" y="0" width="1.6" height="3" rx="0.5" fill="#19b3c6"/><g fill="#fff"><rect x="1.6" y="6.4" width="1.5" height="1.5"/><rect x="5.05" y="6.4" width="1.5" height="1.5"/><rect x="8.5" y="6.4" width="1.5" height="1.5"/><rect x="1.6" y="9.4" width="1.5" height="1.5"/><rect x="5.05" y="9.4" width="1.5" height="1.5"/><rect x="8.5" y="9.4" width="1.5" height="1.5"/></g></svg>
<svg style="position:absolute;left:5.5px;top:136.8px" width="9.5" height="12.4" viewBox="0 0 9.5 12.4"><path d="M0 0 L1.2 0.8 L2.4 0 L3.6 0.8 L4.75 0 L5.9 0.8 L7.1 0 L8.3 0.8 L9.5 0 L9.5 12.4 L8.3 11.6 L7.1 12.4 L5.9 11.6 L4.75 12.4 L3.6 11.6 L2.4 12.4 L1.2 11.6 L0 12.4 Z" fill="#a2a2a2"/><g fill="#fff"><rect x="2.4" y="2.9" width="5" height="0.9"/><rect x="2.4" y="5.7" width="5" height="0.9"/><rect x="2.4" y="8.5" width="5" height="0.9"/></g></svg>
<svg style="position:absolute;left:6px;top:158.3px" width="9" height="12.5" viewBox="0 0 9 12.5"><path d="M7.4 3.6 C7.1 2.5 6 1.9 4.5 1.9 C2.8 1.9 1.6 2.7 1.6 3.9 C1.6 6.4 7.5 5.5 7.5 8.5 C7.5 9.8 6.2 10.6 4.5 10.6 C2.9 10.6 1.7 10 1.3 8.8 M4.5 0 V2.2 M4.5 10.3 V12.5" stroke="#a2a2a2" stroke-width="1.3" fill="none"/></svg>
<svg style="position:absolute;left:4.3px;top:179.7px" width="12.7" height="10.5" viewBox="0 0 12.7 10.5"><rect x="0.7" y="4.8" width="2.6" height="5.7" rx="0.9" fill="#a2a2a2"/><rect x="4.7" y="0.2" width="2.6" height="10.3" rx="0.9" fill="#a2a2a2"/><rect x="8.7" y="1.7" width="2.6" height="8.8" rx="0.9" fill="#a2a2a2"/></svg>
<svg style="position:absolute;left:5.3px;top:200.3px" width="9.9" height="12.5" viewBox="0 0 9.9 12.5"><path d="M0 1 C0 0.4 0.4 0 1 0 L6 0 L6 3.4 L9.9 3.4 L9.9 11.5 C9.9 12.1 9.5 12.5 8.9 12.5 L1 12.5 C0.4 12.5 0 12.1 0 11.5 Z" fill="#a2a2a2"/><path d="M6.6 0.2 L9.7 3 L6.6 3 Z" fill="#a2a2a2"/><path d="M6.3 6.2 C6 5.7 5.5 5.5 4.9 5.5 C4 5.5 3.4 5.9 3.4 6.6 C3.4 8 6.5 7.5 6.5 9 C6.5 9.7 5.9 10.1 4.9 10.1 C4.2 10.1 3.6 9.9 3.3 9.4 M4.95 4.6 V5.5 M4.95 10.1 V11" stroke="#fff" stroke-width="0.9" fill="none"/><path d="M1.6 1.8 H4.2 M1.6 3.4 H4.2" stroke="#fff" stroke-width="0.7"/></svg>
<svg style="position:absolute;left:4.9px;top:221.4px" width="11.1" height="12" viewBox="0 0 11.1 12"><ellipse cx="5.55" cy="2" rx="5.55" ry="2" fill="#a2a2a2"/><path d="M0 3.3 C0 5.6 11.1 5.6 11.1 3.3 V5.6 C11.1 7.8 0 7.8 0 5.6 Z" fill="#a2a2a2"/><path d="M0 7.2 C0 9.4 11.1 9.4 11.1 7.2 V9.8 C11.1 12.6 0 12.6 0 9.8 Z" fill="#a2a2a2"/></svg>
<svg style="position:absolute;left:2.7px;top:243.9px" width="15.7" height="11" viewBox="0 0 15.7 11"><rect x="0" y="0" width="1.3" height="11" fill="#a2a2a2"/><circle cx="4" cy="3.6" r="1.8" fill="#a2a2a2"/><path d="M6.5 2 H13.5 C14.8 2 15.7 3 15.7 4.3 V11 H14.3 V8.5 H1.3 V6.8 H6.5 Z" fill="#a2a2a2"/><rect x="1.3" y="6.8" width="5.2" height="1.7" fill="#a2a2a2"/></svg>
<svg style="position:absolute;left:4.8px;top:264.4px" width="11.2" height="12.1" viewBox="0 0 11.2 12.1"><rect x="0" y="1.6" width="11.2" height="10.5" rx="1" fill="#a2a2a2"/><rect x="2.2" y="0" width="1.5" height="3" fill="#a2a2a2"/><rect x="7.5" y="0" width="1.5" height="3" fill="#a2a2a2"/><rect x="0" y="3.6" width="11.2" height="0.6" fill="#fff"/><path d="M5.6 5.6 V10.6 M3.1 8.1 H8.1" stroke="#fff" stroke-width="1.3"/></svg>
<svg style="position:absolute;left:5.8px;top:409.5px" width="9.5" height="5" viewBox="0 0 9.5 5"><path d="M2.5 5 C2.5 2 3 0.3 4.75 0.3 C6.5 0.3 7 2 7 5 Z" fill="#a2a2a2"/><rect x="0" y="3" width="9.5" height="2" rx="1" fill="#a2a2a2"/></svg>
<div style="position:absolute;left:945.90px;top:97.70px;width:20.2px;height:16.4px;border-radius:50%;background:#e50000"></div>
<div style="position:absolute;left:124.90px;top:128.10px;width:18.3px;height:18.1px;border-radius:50%;background:#e50000"></div>
<div style="position:absolute;left:400.85px;top:129.25px;width:20.9px;height:18.5px;border-radius:50%;background:#e50000"></div>
<div style="position:absolute;left:51.90px;top:179.45px;width:20.2px;height:17.9px;border-radius:50%;background:#e50000"></div>
<div style="position:absolute;left:182.05px;top:265.70px;width:19.9px;height:17.8px;border-radius:50%;background:#e50000"></div>
<div style="position:absolute;left:734.40px;top:265.90px;width:19.8px;height:17.2px;border-radius:50%;background:#e50000"></div>
<div style="position:absolute;left:890.70px;top:265.70px;width:19.6px;height:17.6px;border-radius:50%;background:#e50000"></div>
<div style="position:absolute;left:47.35px;top:320.15px;width:19.7px;height:17.5px;border-radius:50%;background:#e50000"></div>
<div style="position:absolute;left:946.05px;top:389.35px;width:19.9px;height:17.3px;border-radius:50%;background:#e50000"></div>
<span id="t36" style="position:absolute;left:952.58px;top:99.70px;font-size:12.3px;font-weight:400;color:#fff;line-height:14.13px;white-space:pre;letter-spacing:0.000px;">7<span id="mt36" style="display:inline-block;width:0;height:0"></span></span>
<span id="t40" style="position:absolute;left:130.63px;top:130.95px;font-size:12.3px;font-weight:400;color:#fff;line-height:14.13px;white-space:pre;letter-spacing:0.000px;">5<span id="mt40" style="display:inline-block;width:0;height:0"></span></span>
<span id="t43" style="position:absolute;left:407.88px;top:132.30px;font-size:12.3px;font-weight:400;color:#fff;line-height:14.13px;white-space:pre;letter-spacing:0.000px;">6<span id="mt43" style="display:inline-block;width:0;height:0"></span></span>
<span id="t54" style="position:absolute;left:58.58px;top:182.20px;font-size:12.3px;font-weight:400;color:#fff;line-height:14.13px;white-space:pre;letter-spacing:0.000px;">8<span id="mt54" style="display:inline-block;width:0;height:0"></span></span>
<span id="t62" style="position:absolute;left:188.58px;top:268.40px;font-size:12.3px;font-weight:400;color:#fff;line-height:14.13px;white-space:pre;letter-spacing:0.000px;">9<span id="mt62" style="display:inline-block;width:0;height:0"></span></span>
<span id="t66" style="position:absolute;left:737.92px;top:269.30px;font-size:12px;font-weight:400;color:#fff;line-height:13.79px;white-space:pre;letter-spacing:-0.300px;">10<span id="mt66" style="display:inline-block;width:0;height:0"></span></span>
<span id="t68" style="position:absolute;left:894.57px;top:269.30px;font-size:12px;font-weight:400;color:#fff;line-height:13.79px;white-space:pre;letter-spacing:-0.300px;">11<span id="mt68" style="display:inline-block;width:0;height:0"></span></span>
<span id="t88" style="position:absolute;left:50.83px;top:323.70px;font-size:12px;font-weight:400;color:#fff;line-height:13.79px;white-space:pre;letter-spacing:-0.300px;">12<span id="mt88" style="display:inline-block;width:0;height:0"></span></span>
<span id="t92" style="position:absolute;left:949.62px;top:392.80px;font-size:12px;font-weight:400;color:#fff;line-height:13.79px;white-space:pre;letter-spacing:-0.300px;">13<span id="mt92" style="display:inline-block;width:0;height:0"></span></span></div></body></html>
